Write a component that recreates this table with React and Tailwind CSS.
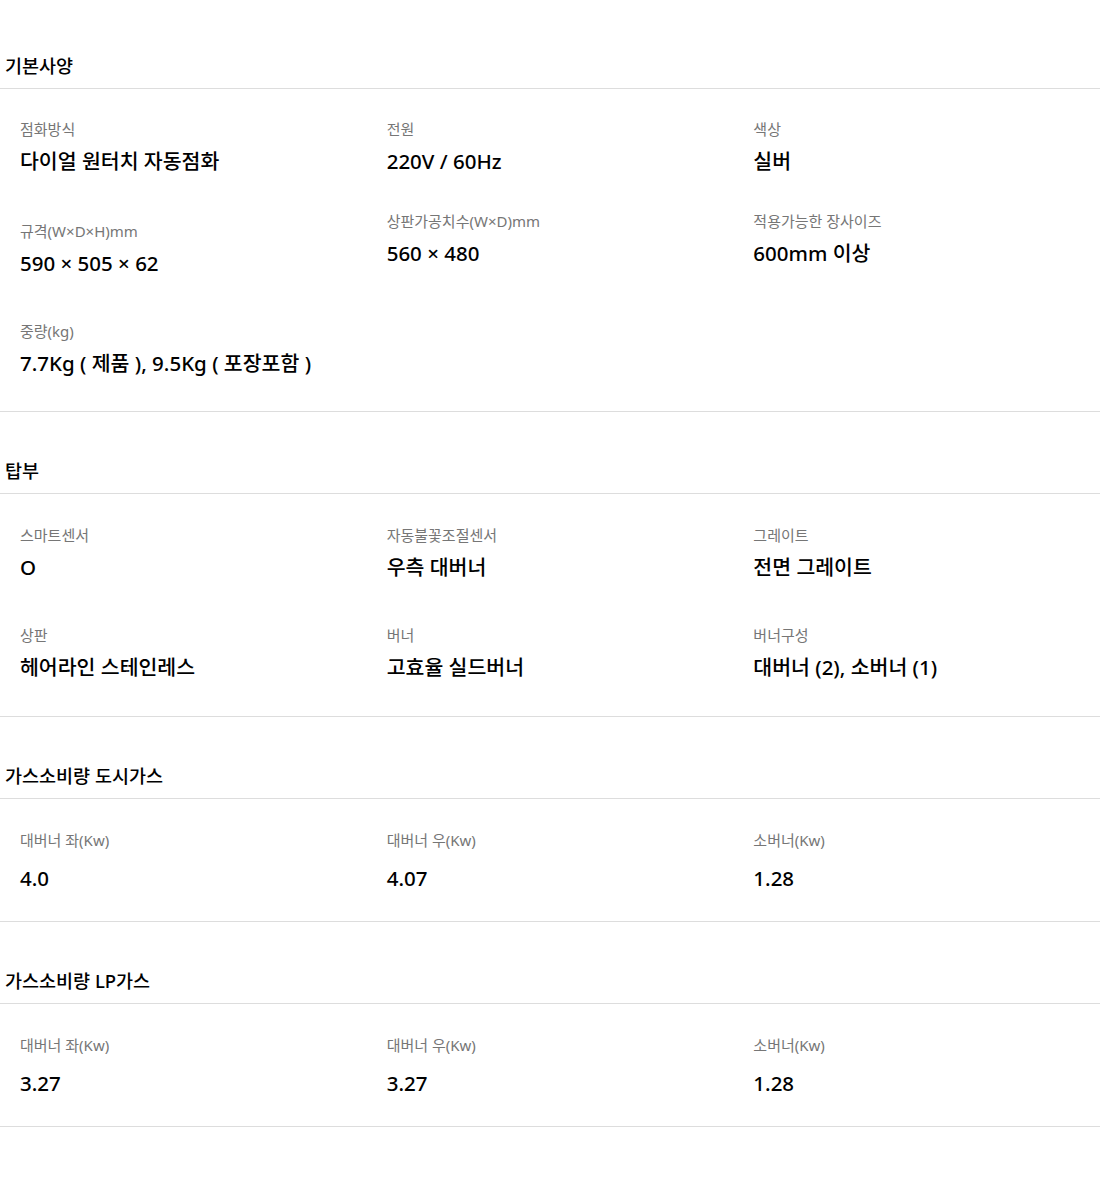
import React from 'react';

const sections = [
    {
        title: '기본사양',
        items: [
            { label: '점화방식', value: '다이얼 원터치 자동점화' },
            { label: '전원', value: '220V / 60Hz' },
            { label: '색상', value: '실버' },
            { label: '규격(W×D×H)mm', value: '590 × 505 × 62', shift: 'mt-[2px]' },
            { label: '상판가공치수(W×D)mm', value: '560 × 480', shift: '-mt-[8px]' },
            { label: '적용가능한 장사이즈', value: '600mm 이상', shift: '-mt-[8px]' },
            { label: '중량(kg)', value: '7.7Kg ( 제품 ), 9.5Kg ( 포장포함 )' }
        ]
    },
    {
        title: '탑부',
        items: [
            { label: '스마트센서', value: 'O' },
            { label: '자동불꽃조절센서', value: '우측 대버너' },
            { label: '그레이트', value: '전면 그레이트' },
            { label: '상판', value: '헤어라인 스테인레스' },
            { label: '버너', value: '고효율 실드버너' },
            { label: '버너구성', value: '대버너 (2), 소버너 (1)' }
        ]
    },
    {
        title: '가스소비량 도시가스',
        numeric: true,
        items: [
            { label: '대버너 좌(Kw)', value: '4.0' },
            { label: '대버너 우(Kw)', value: '4.07' },
            { label: '소버너(Kw)', value: '1.28' }
        ]
    },
    {
        title: '가스소비량 LP가스',
        numeric: true,
        items: [
            { label: '대버너 좌(Kw)', value: '3.27' },
            { label: '대버너 우(Kw)', value: '3.27' },
            { label: '소버너(Kw)', value: '1.28' }
        ]
    }
];

const SpecItem = ({ label, value, shift = '', numeric }) => (
    <div className={`pl-[20px] ${shift}`}>
        <p className="text-[15px] leading-[20px] text-[#767676]">{label}</p>
        <p className={`${numeric ? 'mt-[14px] mb-[-6px]' : 'mt-[8px]'} text-[20.5px] leading-[28px] font-medium text-black`}>
            {value}
        </p>
    </div>
);

const App = () => {
    return (
        <div
            className="w-[1100px] min-h-[1179px] bg-white pt-[54px]"
            style={{ fontFamily: '"Noto Sans", "Noto Sans CJK KR", sans-serif' }}
        >
            {sections.map((section, i) => (
                <section key={section.title} className={i === 0 ? '' : 'mt-[47px]'}>
                    <h3 className="pl-[5px] pb-[10px] text-[18.5px] leading-[24px] font-medium text-black border-b border-[#dddddd]">
                        {section.title}
                    </h3>
                    <div
                        className={`grid grid-cols-3 gap-y-[44px] ${i === 0 ? 'pt-[30px] pb-[34px]' : 'pt-[31px] pb-[35px]'} border-b border-[#dddddd]`}
                    >
                        {section.items.map((item) => (
                            <SpecItem key={item.label} numeric={section.numeric} {...item} />
                        ))}
                    </div>
                </section>
            ))}
        </div>
    );
};

export default App;
